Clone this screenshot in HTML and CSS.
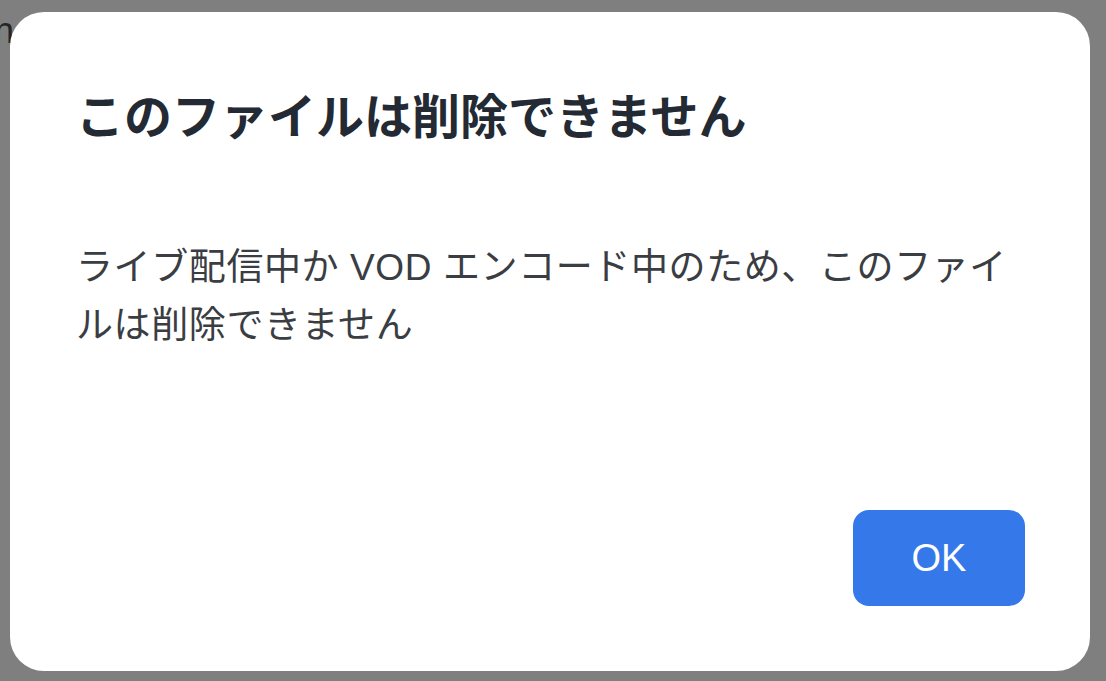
FILE: index.html
```html
<!DOCTYPE html>
<html lang="ja">
<head>
    <meta charset="UTF-8">
    <meta name="viewport" content="width=device-width, initial-scale=1.0">
    <title>削除エラー</title>
    <link rel="stylesheet" href="styles.css">
</head>
<body>
<div class="page">
    <span class="page-title">ne</span>
</div>
<div class="overlay">
    <div class="dialog">
        <h2 class="dialog-title">このファイルは削除できません</h2>
        <p class="dialog-text">ライブ配信中か VOD エンコード中のため、このファイルは削除できません</p>
        <div class="dialog-actions">
            <button class="ok-btn">OK</button>
        </div>
    </div>
</div>
</body>
</html>
```

FILE: styles.css
```css
body { margin: 0; padding: 0; font-family: "Liberation Sans", "Noto Sans CJK JP", sans-serif; background: #fff; }
.page { height: 681px; padding: 10px 0 0 0; box-sizing: border-box; overflow: hidden; }
.page-title { display: block; margin-left: -6px; font-size: 36px; color: #4a4a4a; }

.overlay {
    position: fixed;
    top: 0; left: 0; right: 0; bottom: 0;
    background-color: rgba(0, 0, 0, 0.5);
    padding: 12px 16px 10px 10px;
    box-sizing: border-box;
    display: flex;
}
.dialog {
    flex: 1;
    background: #fff;
    border-radius: 34px;
    padding: 0 65px 65px 66px;
    display: flex;
    flex-direction: column;
}
.dialog-title { margin: 77px 0 0 0; font-size: 48px; font-weight: bold; line-height: 1.2; color: #232a33; }
.dialog-text { margin: 92px 0 0 0; font-size: 37px; line-height: 58px; letter-spacing: 0.6px; color: #3a3d42; }
.dialog-actions { margin-top: auto; display: flex; justify-content: flex-end; }
.ok-btn {
    width: 172px;
    height: 96px;
    border: none;
    border-radius: 16px;
    background-color: #3578ea;
    color: #fff;
    font-family: "Liberation Sans", sans-serif;
    font-size: 38px;
    cursor: pointer;
}
```
